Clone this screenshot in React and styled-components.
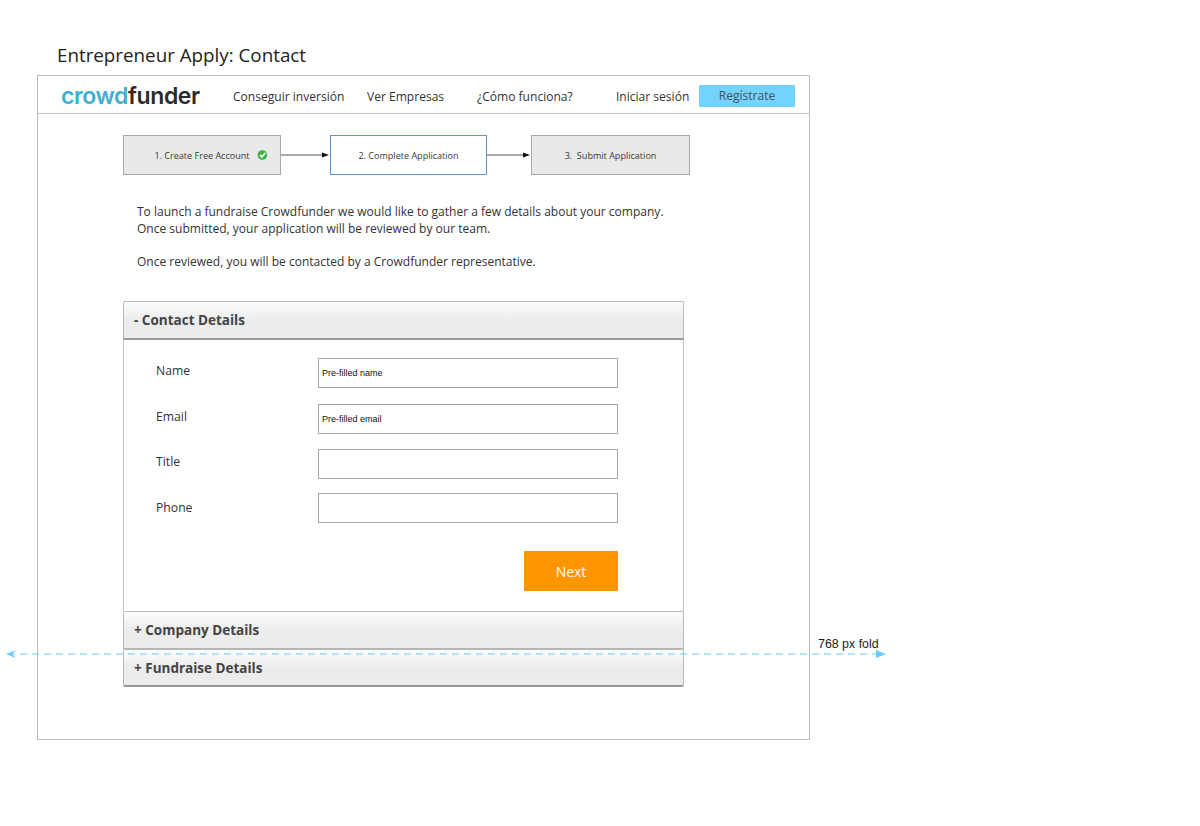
import React from "react";
import styled, { createGlobalStyle } from "styled-components";

const GlobalStyle = createGlobalStyle`
  html, body {
    margin: 0;
    padding: 0;
    background: #fff;
    font-family: "Open Sans", "Liberation Sans", sans-serif;
    color: #333;
  }
`;

const Page = styled.div`
  position: relative;
  width: 1200px;
  height: 826px;
  padding: 42px 0 0 37px;
  box-sizing: border-box;
  overflow: hidden;
`;

const PageTitle = styled.h1`
  margin: 0 0 6px 20px;
  font-size: 18.8px;
  line-height: 27px;
  font-weight: 400;
  color: #222;
`;

const Frame = styled.div`
  width: 773px;
  height: 665px;
  border: 1px solid #bdbdbd;
  box-sizing: border-box;
`;

const Header = styled.header`
  display: flex;
  align-items: center;
  height: 38px;
  box-sizing: border-box;
  border-bottom: 1px solid #c2c2c2;
  padding: 3px 14px 0 23px;
`;

const Logo = styled.div`
  width: 172px;
  font-family: "Inter", sans-serif;
  font-size: 23px;
  font-weight: 600;
  letter-spacing: -0.4px;
  color: #2b2b2b;
  line-height: 30px;
  span {
    color: #3fb0cf;
  }
`;

const NavItem = styled.a`
  width: ${(p) => p.$w}px;
  flex: none;
  font-size: 12.05px;
  color: #333;
`;

const SignUp = styled.a`
  width: 96px;
  height: 22px;
  margin-left: auto;
  background: #73d2ff;
  border-radius: 1px;
  font-size: 12.05px;
  line-height: 22px;
  text-align: center;
  color: #45525c;
`;

const Main = styled.main`
  padding: 21px 0 0 85px;
`;

const Steps = styled.div`
  display: flex;
  align-items: center;
`;

const Step = styled.div`
  display: flex;
  align-items: center;
  justify-content: center;
  gap: 7px;
  width: ${(p) => p.$w}px;
  height: 40px;
  box-sizing: border-box;
  padding-left: ${(p) => p.$indent || 0}px;
  border: 1px solid ${(p) => (p.$active ? "#5c94cf" : "#a9a9a9")};
  background: ${(p) => (p.$active ? "#fff" : "#e9e9e9")};
  font-size: 9.05px;
  color: #3a3a3a;
  white-space: pre;
`;

const Connector = styled.svg`
  display: block;
  flex: none;
`;

const Intro = styled.div`
  margin: 29px 0 0 14px;
  font-size: 12.03px;
  line-height: 16.5px;
  color: #333;
  p {
    margin: 0 0 16.5px;
  }
`;

const Accordion = styled.section`
  width: 561px;
  margin-top: 31px;
`;

const PanelHead = styled.div`
  height: ${(p) => p.$h}px;
  box-sizing: border-box;
  display: flex;
  align-items: center;
  padding-left: 10px;
  border: 1px solid #b9b9b9;
  border-bottom: ${(p) => (p.$last || p.$open ? "2px solid #999" : "1px solid #b4b4b4")};
  border-radius: 2px 2px ${(p) => (p.$last ? "2px 2px" : "0 0")};
  background: linear-gradient(#fcfcfc, #ececec 50%, #ececec);
  font-size: 13.5px;
  font-weight: 700;
  color: #444;
`;

const PanelBody = styled.div`
  height: 271px;
  box-sizing: border-box;
  padding: 18px 65px 0 32px;
  border: solid #c4c4c4;
  border-width: 0 1px;
`;

const Row = styled.div`
  display: flex;
  justify-content: space-between;
  height: 30px;
  margin-bottom: ${(p) => p.$gap}px;
`;

const FieldLabel = styled.label`
  font-size: 12.2px;
  line-height: 17px;
  padding-top: ${(p) => p.$top}px;
  color: #333;
`;

const TextInput = styled.input`
  width: 300px;
  height: 30px;
  box-sizing: border-box;
  border: 1px solid #a6a6a6;
  outline: none;
  padding: 0 3px;
  font-family: "Liberation Sans", sans-serif;
  font-size: 9px;
  color: #111;
`;

const Actions = styled.div`
  display: flex;
  justify-content: flex-end;
  margin-top: 28px;
`;

const NextButton = styled.button`
  width: 94px;
  height: 40px;
  border: none;
  border-radius: 1px;
  background: #ff9500;
  color: #fff;
  font-family: "Open Sans", sans-serif;
  font-size: 14px;
`;

const FoldLine = styled.svg`
  position: absolute;
  left: 0;
  top: 648px;
`;

const FoldLabel = styled.span`
  position: absolute;
  left: 818px;
  top: 637px;
  font-family: "Liberation Sans", sans-serif;
  font-size: 12.4px;
  line-height: 15px;
  color: #222;
`;

const Arrow = ({ width }) => (
  <Connector width={width} height="10" viewBox={`0 0 ${width} 10`}>
    <line x1="0" y1="5" x2={width - 6} y2="5" stroke="#555" strokeWidth="1.2" />
    <path d={`M${width - 8} 2.5 L${width - 1} 5 L${width - 8} 7.5 Z`} fill="#111" />
  </Connector>
);

const Check = () => (
  <svg width="11" height="10" viewBox="0 0 11 10">
    <circle cx="5.4" cy="5" r="4.8" fill="#35b53a" />
    <path d="M3 4.9 L4.9 6.9 L8.6 2.8" fill="none" stroke="#fff" strokeWidth="1.7" />
  </svg>
);

const fields = [
  { label: "Name", value: "Pre-filled name", gap: 16, top: 4 },
  { label: "Email", value: "Pre-filled email", gap: 15, top: 4 },
  { label: "Title", value: "", gap: 14, top: 4 },
  { label: "Phone", value: "", gap: 0, top: 6 },
];

export default function App() {
  return (
    <Page>
      <GlobalStyle />
      <PageTitle>Entrepreneur Apply: Contact</PageTitle>
      <Frame>
        <Header>
          <Logo>
            <span>crowd</span>funder
          </Logo>
          <NavItem $w={134}>Conseguir inversión</NavItem>
          <NavItem $w={110}>Ver Empresas</NavItem>
          <NavItem $w={139}>¿Cómo funciona?</NavItem>
          <NavItem $w={80}>Iniciar sesión</NavItem>
          <SignUp>Regístrate</SignUp>
        </Header>
        <Main>
          <Steps>
            <Step $w={158} $indent={18}>
              1. Create Free Account
              <Check />
            </Step>
            <Arrow width={49} />
            <Step $w={157} $active>2. Complete Application</Step>
            <Arrow width={44} />
            <Step $w={159}>3.  Submit Application</Step>
          </Steps>
          <Intro>
            <p>
              To launch a fundraise Crowdfunder we would like to gather a few details about your company.
              <br />
              Once submitted, your application will be reviewed by our team.
            </p>
            <p>Once reviewed, you will be contacted by a Crowdfunder representative.</p>
          </Intro>
          <Accordion>
            <PanelHead $h={39} $open>- Contact Details</PanelHead>
            <PanelBody>
              {fields.map((f) => (
                <Row key={f.label} $gap={f.gap}>
                  <FieldLabel $top={f.top}>{f.label}</FieldLabel>
                  <TextInput defaultValue={f.value} />
                </Row>
              ))}
              <Actions>
                <NextButton>Next</NextButton>
              </Actions>
            </PanelBody>
            <PanelHead $h={38}>+ Company Details</PanelHead>
            <PanelHead $h={38} $last>+ Fundraise Details</PanelHead>
          </Accordion>
        </Main>
      </Frame>
      <FoldLabel>768 px fold</FoldLabel>
      <FoldLine width="900" height="12" viewBox="0 0 900 12">
        <line x1="8" y1="6" x2="878" y2="6" stroke="#66ccff" strokeWidth="1.2" strokeDasharray="7 5" />
        <path d="M16 2 L6 6 L16 10 L12 6 Z" fill="#66ccff" />
        <path d="M876 2 L886 6 L876 10 Z" fill="#66ccff" />
      </FoldLine>
    </Page>
  );
}
